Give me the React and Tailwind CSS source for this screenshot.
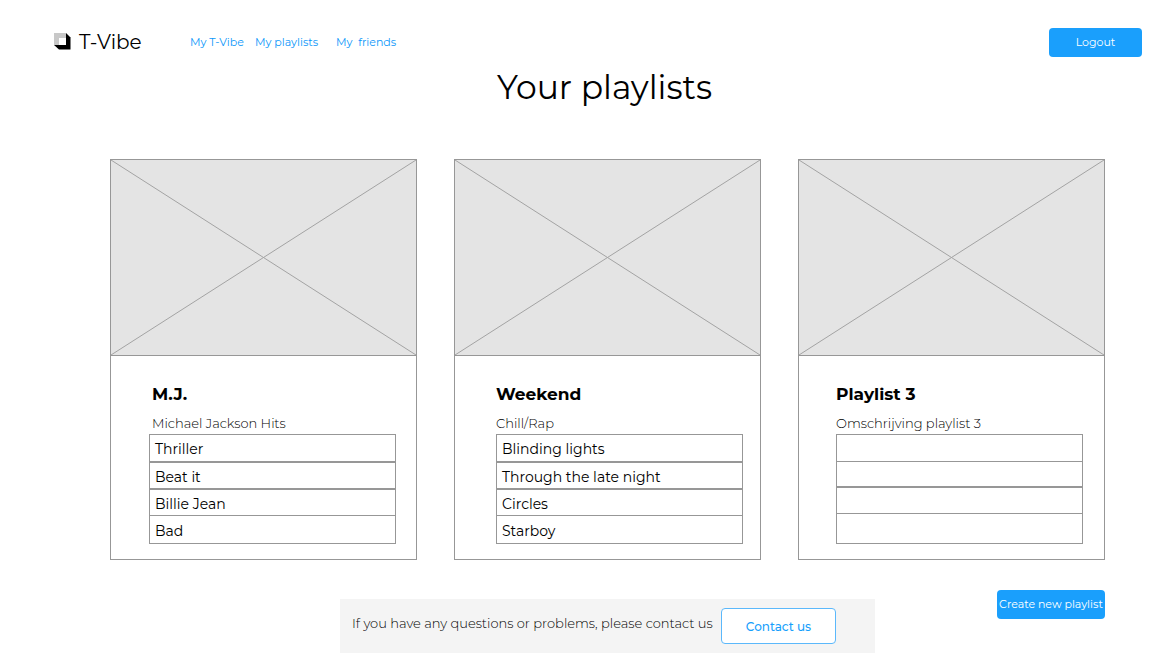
const playlists = [
  {
    title: 'M.J.',
    description: 'Michael Jackson Hits',
    songs: ['Thriller', 'Beat it', 'Billie Jean', 'Bad'],
    textInset: 'pl-[41px]',
    listInset: 'pl-[38px] pr-[20px]',
    rows: 'grid-rows-[26px_27px_27px_28px]',
    lines: ['', 'border-t-2', 'border-t-2', 'border-t'],
  },
  {
    title: 'Weekend',
    description: 'Chill/Rap',
    songs: ['Blinding lights', 'Through the late night', 'Circles', 'Starboy'],
    textInset: 'pl-[41px]',
    listInset: 'pl-[41px] pr-[17px]',
    rows: 'grid-rows-[26px_27px_27px_28px]',
    lines: ['', 'border-t-2', 'border-t-2', 'border-t'],
  },
  {
    title: 'Playlist 3',
    description: 'Omschrijving playlist 3',
    songs: ['', '', '', ''],
    textInset: 'pl-[37px]',
    listInset: 'pl-[37px] pr-[21px]',
    rows: 'grid-rows-[26px_25px_27px_30px]',
    lines: ['', 'border-t', 'border-t-2', 'border-t'],
  },
];

function Logo() {
  return (
    <svg className="h-[17px] w-[17px]" viewBox="0 0 17 17" aria-hidden="true">
      <path d="M12 0 L16.5 4.5 V16.5 H5 L0 12 Z" fill="#000" />
      <path d="M0 0 H12 V12 H0 Z" fill="#c8c8c8" />
      <path d="M5 5 H12 V12 H5 Z" fill="#fff" />
    </svg>
  );
}

function Placeholder() {
  return (
    <svg className="block h-[196px] w-full border-b border-[#979797] bg-[#e4e4e4]" viewBox="0 0 305 195" preserveAspectRatio="none" aria-hidden="true">
      <path d="M0 0 L305 195 M305 0 L0 195" stroke="#a3a3a3" strokeWidth="1" fill="none" />
    </svg>
  );
}

function PlaylistCard({ playlist }) {
  return (
    <article className="border border-[#979797] pb-[15px]">
      <Placeholder />
      <div className={playlist.textInset}>
        <h2 className="pt-[26px] text-[17px] leading-6 font-bold">{playlist.title}</h2>
        <p className="pt-[7px] text-[13px] leading-5 font-light">{playlist.description}</p>
      </div>
      <div className={playlist.listInset}>
        <ul className={`mt-px grid border border-[#979797] ${playlist.rows}`}>
          {playlist.songs.map((song, index) => (
            <li key={index} className={`flex items-center border-[#979797] pt-0.5 pl-[5px] text-sm leading-5 ${playlist.lines[index]}`}>
              {song}
            </li>
          ))}
        </ul>
      </div>
    </article>
  );
}

export default function App() {
  return (
    <div className="bg-white pb-0.5 font-['Montserrat','Inter',sans-serif] text-black">
      <header className="flex items-center pt-7 pr-[25px] pl-[54px]">
        <a href="#home" className="flex w-[136px] items-center gap-2 pb-0.5 text-xl leading-6">
          <Logo />
          T-Vibe
        </a>
        <nav className="flex pb-px text-[11px] leading-4 text-[#0b97fa]">
          <a href="#vibe" className="w-[65px]">My T-Vibe</a>
          <a href="#playlists" className="w-[81px]">My playlists</a>
          <a href="#friends" className="whitespace-pre">My  friends</a>
        </nav>
        <button type="button" className="ml-auto h-[29px] w-[93px] rounded bg-[#1a9ffc] text-[11px] text-white">
          Logout
        </button>
      </header>
      <main className="pr-[62px] pl-[110px]">
        <h1 className="pt-2 pr-1.5 text-center text-[33px] leading-11">Your playlists</h1>
        <section className="grid grid-cols-3 gap-[37px] pt-[50px]">
          {playlists.map((playlist) => (
            <PlaylistCard key={playlist.title} playlist={playlist} />
          ))}
        </section>
      </main>
      <div className="flex items-start justify-between pt-[30px] pr-[62px] pl-[340px]">
        <footer className="mt-[9px] flex h-[54px] w-[535px] items-center bg-[#f4f4f4] pl-3">
          <p className="w-[369px] pb-1 text-[13px] font-light whitespace-nowrap">If you have any questions or problems, please contact us</p>
          <button type="button" className="h-9 w-[115px] rounded border border-[#5bb8fb] bg-white pt-0.5 text-xs font-medium text-[#189ffc]">
            Contact us
          </button>
        </footer>
        <button type="button" className="h-[29px] w-[108px] rounded bg-[#1a9ffc] text-[11px] whitespace-nowrap text-white">
          Create new playlist
        </button>
      </div>
    </div>
  );
}
